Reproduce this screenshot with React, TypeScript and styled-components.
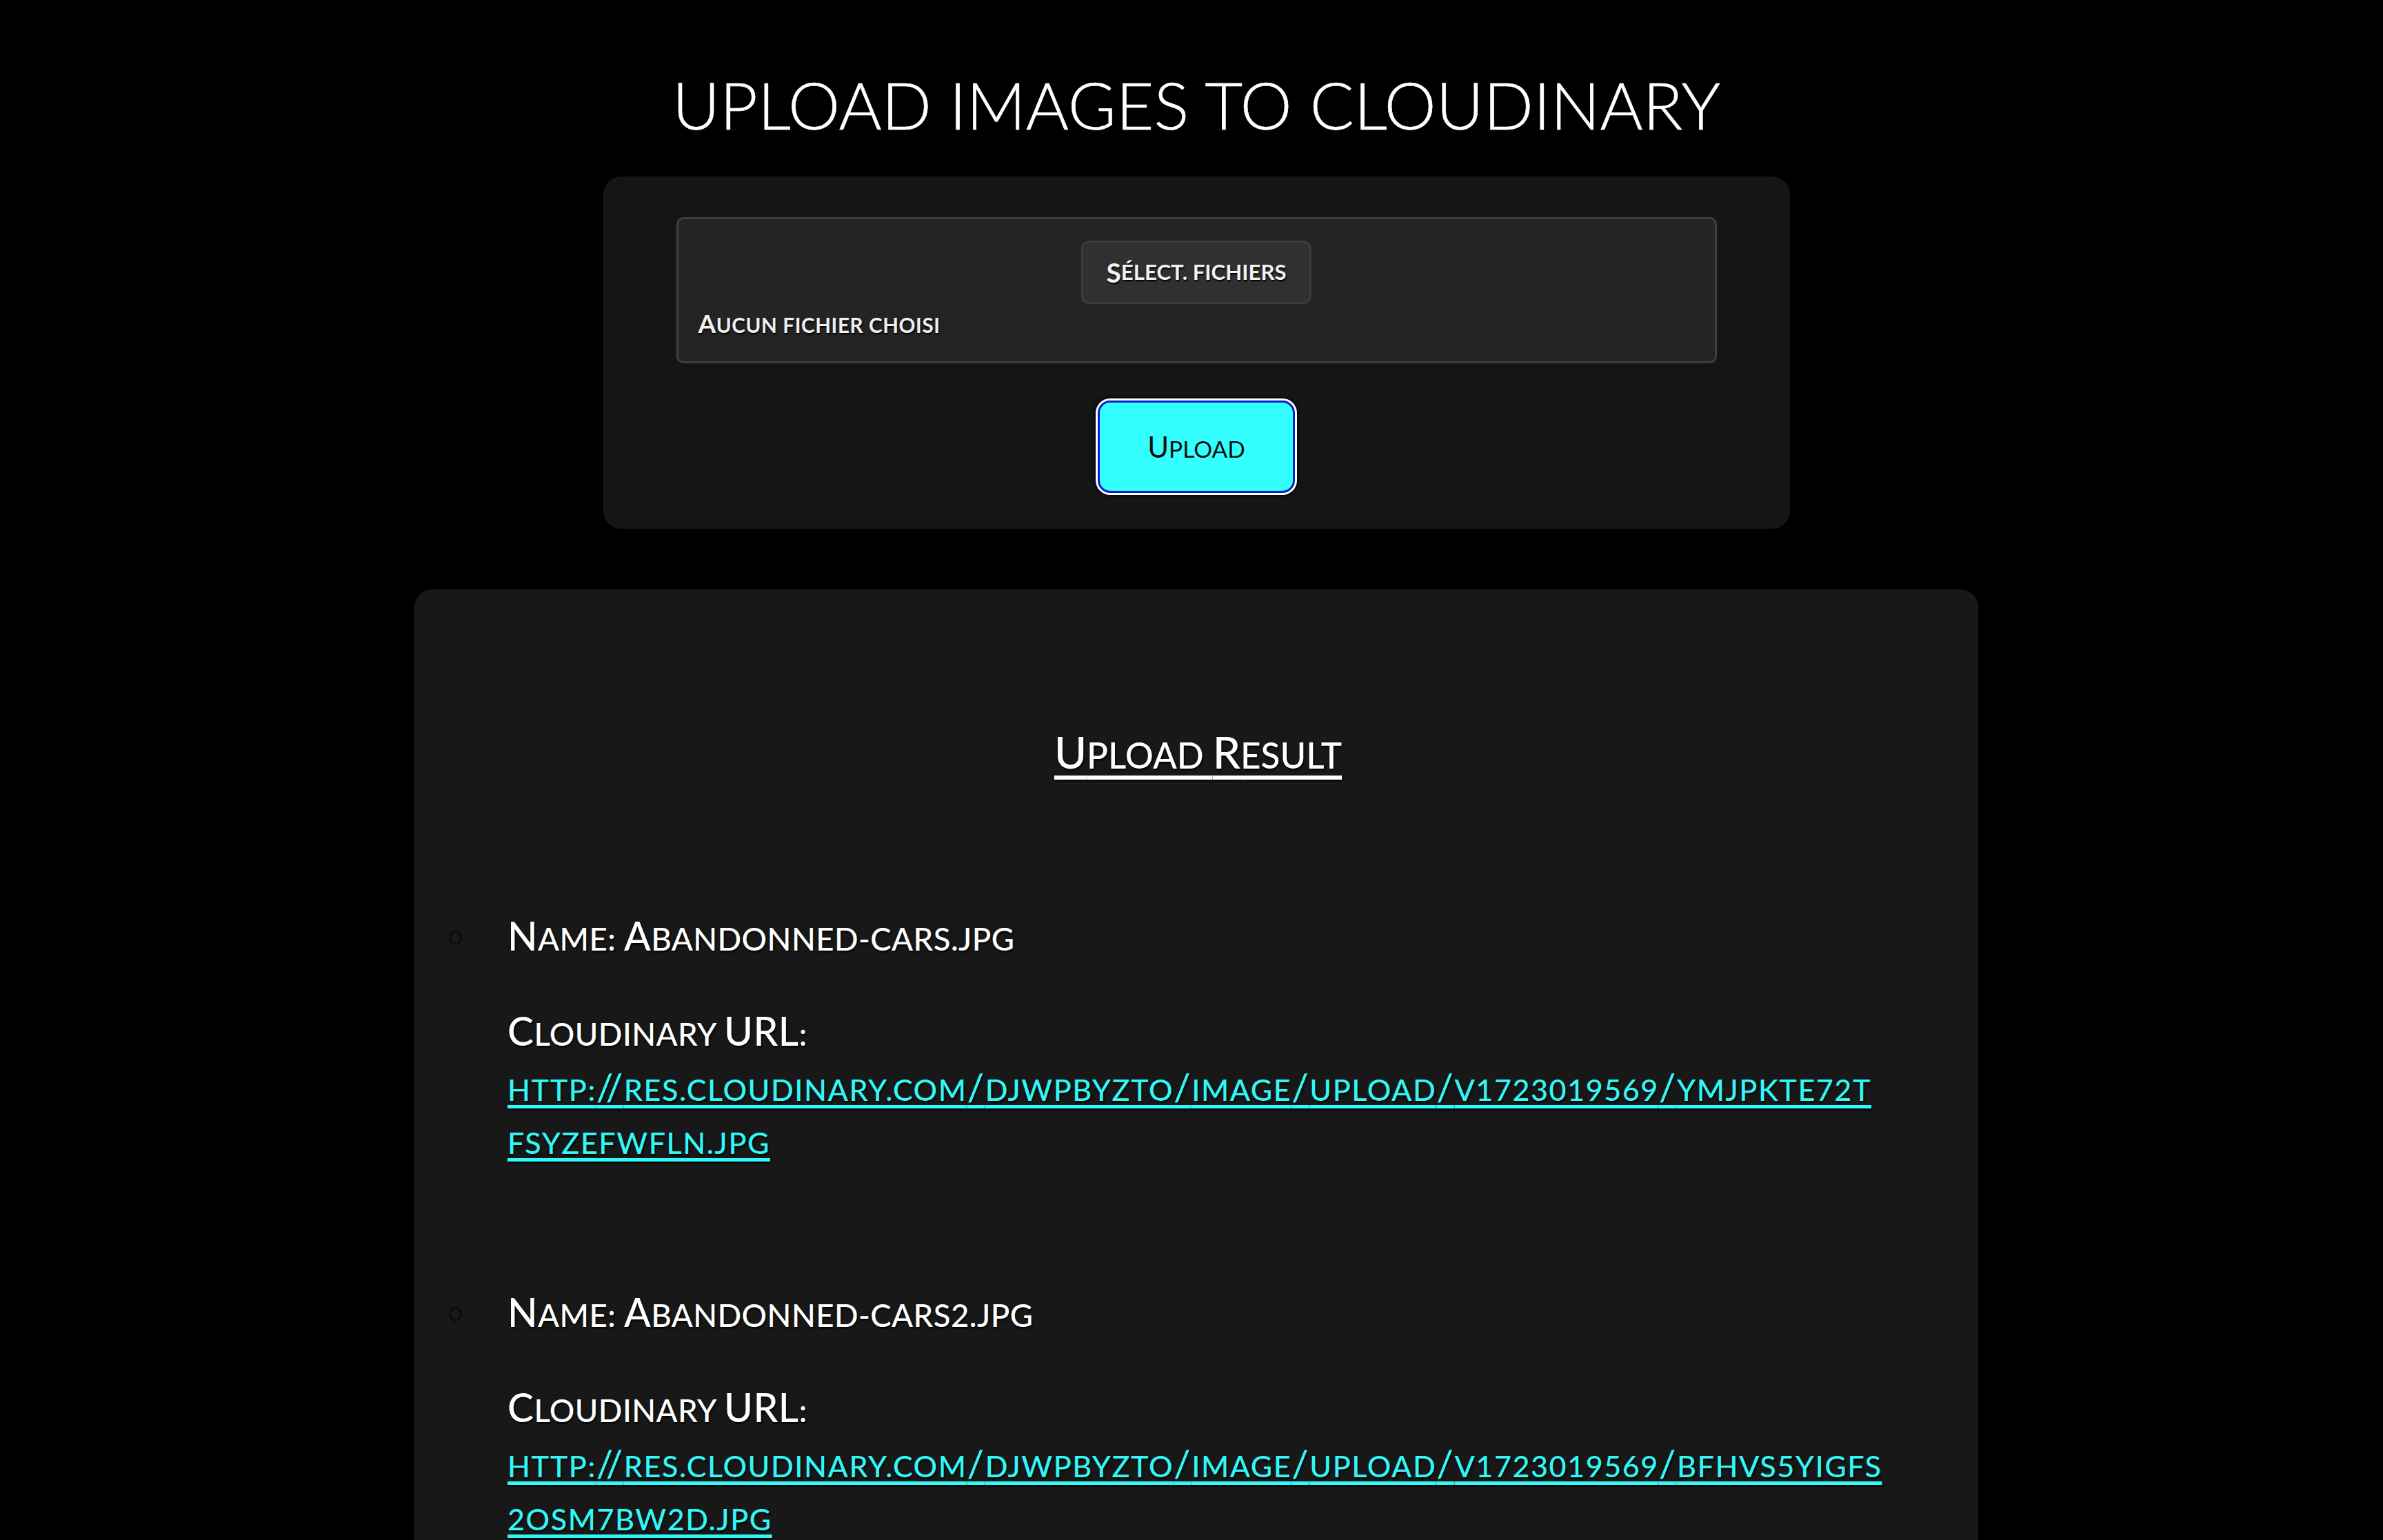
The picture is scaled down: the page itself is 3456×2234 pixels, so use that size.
import React from "react";
import styled, { createGlobalStyle } from "styled-components";

const GlobalStyle = createGlobalStyle`
  html, body {
    margin: 0;
    padding: 0;
    background: #000;
  }
  body {
    font-family: Lato, "Open Sans", "DejaVu Sans", sans-serif;
    color: #fff;
  }
`;

const Page = styled.div`
  display: flex;
  flex-direction: column;
  align-items: center;
  padding: 96px 0 0 14px;
  min-height: 2234px;
  box-sizing: border-box;
`;

const Title = styled.h1`
  margin: 0 0 50px;
  font-size: 95px;
  line-height: 110px;
  font-weight: 300;
  color: #fff;
  text-transform: uppercase;
  -webkit-text-stroke: 0.6px #fff;
`;

// lowercase letters and digits drawn as smaller capitals
const Small = styled.span`
  font-size: 0.8em;
  line-height: 1;
  text-transform: uppercase;
`;

const SmallCaps = ({ text }: { text: string }) => (
  <>
    {text.split(/([A-ZÉ\/]+)/).map((part, i) =>
      i % 2 === 1 ? part : part ? <Small key={i}>{part}</Small> : null
    )}
  </>
);

const UploadCard = styled.div`
  width: 1721px;
  box-sizing: border-box;
  background: #151515;
  border-radius: 26px;
  padding: 59px 106px 52px;
  display: flex;
  flex-direction: column;
  align-items: center;
  gap: 54px;
`;

const FileBox = styled.label`
  width: 100%;
  box-sizing: border-box;
  background: #242424;
  border: 3px solid #3e3e3e;
  border-radius: 10px;
  padding: 31px 29px 34px;
  display: flex;
  flex-direction: column;
  gap: 6px;
  text-shadow: 1px 2px 2px #000;
`;

const PickButton = styled.span`
  align-self: center;
  height: 92px;
  box-sizing: border-box;
  padding: 0 33px;
  display: flex;
  align-items: center;
  background: #303030;
  border: 3px solid #3c3c3c;
  border-radius: 12px;
  font-size: 39px;
  line-height: 1;
  font-weight: 700;
  color: #f2f2f2;
`;

const FileStatus = styled.span`
  font-size: 37px;
  line-height: 43px;
  letter-spacing: 0.6px;
  font-weight: 700;
  color: #f0f0f0;
`;

const UploadButton = styled.button`
  width: 286px;
  height: 134px;
  box-sizing: border-box;
  background: #33ffff;
  border: 3px solid #0b1fc4;
  border-radius: 18px;
  box-shadow: 0 0 0 3px #fff, 0 0 4px 4px #000;
  font-family: inherit;
  font-size: 42px;
  font-weight: 400;
  color: #0d0d0d;
  cursor: pointer;
`;

const ResultsCard = styled.section`
  margin-top: 88px;
  width: 2268px;
  box-sizing: border-box;
  background: #181818;
  border-radius: 26px;
  padding: 199px 130px 120px 135px;
`;

const ResultsTitle = styled.h2`
  margin: 0 0 191px;
  text-align: center;
  font-size: 64px;
  line-height: 74px;
  font-weight: 500;
  color: #fff;
  text-decoration: underline;
  text-decoration-thickness: 6px;
  text-underline-offset: 10px;
  text-shadow: 1px 2px 3px #000;
`;

const ResultList = styled.ul`
  list-style: none;
  margin: 0;
  padding: 0;
  display: flex;
  flex-direction: column;
  gap: 173px;
`;

const ResultItem = styled.li`
  position: relative;
  color: #fff;
  text-shadow: 1px 2px 3px #000;

  &::before {
    content: "";
    position: absolute;
    left: -85px;
    top: 31px;
    width: 13px;
    height: 15px;
    border: 3px solid #0c0c0c;
    border-radius: 50%;
  }
`;

const Line = styled.p<{ $gap?: number }>`
  margin: ${(p) => p.$gap ?? 0}px 0 0;
  font-size: 57px;
  line-height: 77px;
  letter-spacing: 0.4px;
  font-weight: 500;
`;

const UrlLink = styled.a`
  display: block;
  margin-top: 4px;
  font-size: 54px;
  line-height: 77px;
  letter-spacing: 1.5px;
  font-weight: 500;
  color: #33f6f6;
  word-break: break-all;
  text-decoration: underline;
  text-decoration-thickness: 5px;
  text-underline-offset: 6px;
`;

const results = [
  {
    name: "Abandonned-cars.jpg",
    url: "http://res.cloudinary.com/djwpbyzto/image/upload/v1723019569/ymjpkte72tfsyzefwfln.jpg",
  },
  {
    name: "Abandonned-cars2.jpg",
    url: "http://res.cloudinary.com/djwpbyzto/image/upload/v1723019569/bfhvs5yigfs2osm7bw2d.jpg",
  },
];

const App = () => {
  return (
    <>
      <GlobalStyle />
      <Page>
        <Title>Upload images to Cloudinary</Title>
        <UploadCard>
          <FileBox>
            <PickButton>
              <SmallCaps text="Sélect. fichiers" />
            </PickButton>
            <FileStatus>
              <SmallCaps text="Aucun fichier choisi" />
            </FileStatus>
          </FileBox>
          <UploadButton>
            <SmallCaps text="Upload" />
          </UploadButton>
        </UploadCard>
        <ResultsCard>
          <ResultsTitle>
            <SmallCaps text="Upload Result" />
          </ResultsTitle>
          <ResultList>
            {results.map((r) => (
              <ResultItem key={r.url}>
                <Line>
                  <SmallCaps text={`Name: ${r.name}`} />
                </Line>
                <Line $gap={61}>
                  <SmallCaps text="Cloudinary URL:" />
                </Line>
                <UrlLink href={r.url}>
                  <SmallCaps text={r.url} />
                </UrlLink>
              </ResultItem>
            ))}
          </ResultList>
        </ResultsCard>
      </Page>
    </>
  );
};

export default App;
